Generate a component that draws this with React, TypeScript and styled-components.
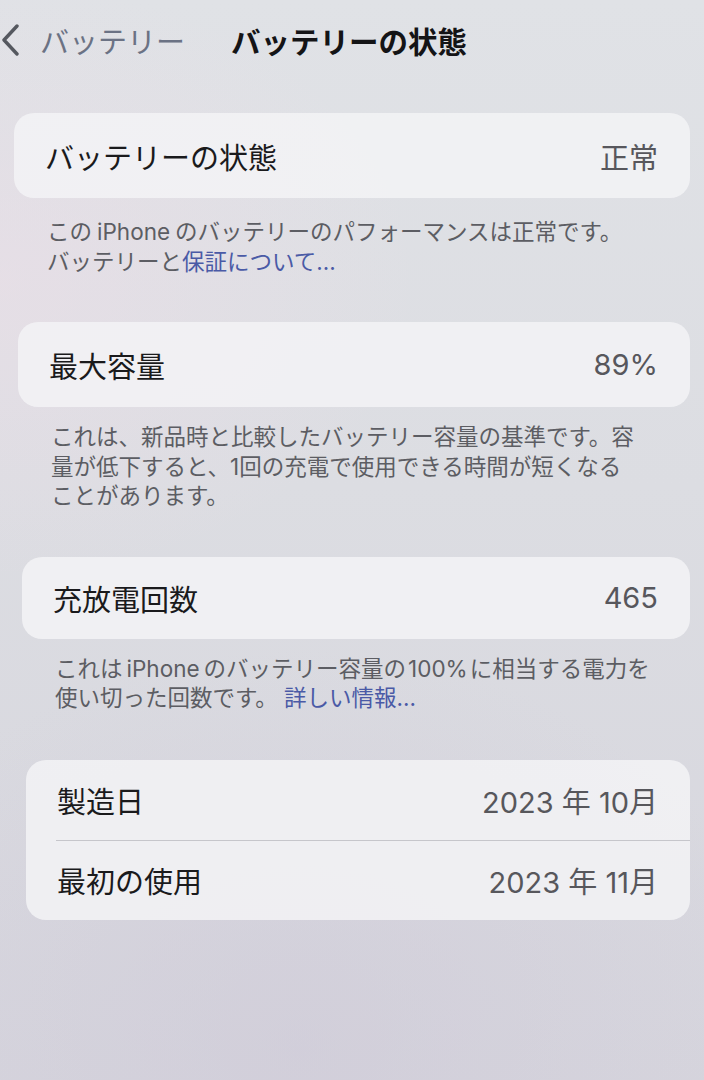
import React from 'react';
import styled, { createGlobalStyle } from 'styled-components';

const GlobalStyle = createGlobalStyle`
    html, body {
        margin: 0;
        padding: 0;
    }
    body {
        font-family: Inter, 'Noto Sans CJK JP', 'Noto Sans', sans-serif;
        -webkit-font-smoothing: antialiased;
    }
`;

const Screen = styled.div`
    width: 704px;
    height: 1080px;
    overflow: hidden;
    box-sizing: border-box;
    background:
        radial-gradient(ellipse 420px 300px at 0px 280px, rgba(236, 222, 232, 0.55), transparent),
        radial-gradient(ellipse 500px 400px at 300px 1050px, rgba(205, 200, 215, 0.5), transparent),
        linear-gradient(180deg, #e0e2e6 0%, #dcdde2 45%, #d6d5dd 100%);
    color: #1c1c1e;
`;

const NavBar = styled.div`
    display: flex;
    align-items: center;
    height: 80px;
    padding: 0 0 0 1px;
`;

const BackButton = styled.div`
    display: flex;
    align-items: center;
    gap: 20px;
    color: #6b7284;
    font-size: 29px;
`;

const NavTitle = styled.div`
    margin-left: 46px;
    font-size: 29.5px;
    font-weight: 700;
    color: #141416;
`;

const Section = styled.section<{ $indent: number; $gap: number }>`
    margin: ${p => p.$gap}px 14px 0 ${p => p.$indent}px;
`;

const Card = styled.div`
    background: rgba(243, 243, 246, 0.85);
    border-radius: 20px;
    overflow: hidden;
`;

const Row = styled.div<{ $height: number }>`
    display: flex;
    align-items: center;
    justify-content: space-between;
    height: ${p => p.$height}px;
    padding: 0 32px 0 31px;
    font-size: 29px;
`;

const Divider = styled.div`
    height: 1px;
    margin-left: 30px;
    background: #c6c6cb;
`;

const Label = styled.span`
    color: #1a1a1c;
`;

const Value = styled.span`
    color: #57575c;
`;

const Footer = styled.p<{ $top: number }>`
    margin: ${p => p.$top}px 0 0 0;
    padding-left: 33px;
    font-size: 22.5px;
    line-height: 29.5px;
    color: #5c5d63;
    white-space: nowrap;
`;

// latin words set inside Japanese text get a little air on each side
const Latin = styled.span<{ $space: number }>`
    margin: 0 ${p => p.$space}px;
`;

const Link = styled.span`
    color: #4a5aa6;
`;

const Chevron = () => (
    <svg width="19" height="32" viewBox="0 0 19 32" fill="none">
        <path d="M16 2 L3 16 L16 30" stroke="#55585f" strokeWidth="3.4" strokeLinecap="round" strokeLinejoin="round" />
    </svg>
);

const App: React.FC = () => (
    <Screen>
        <GlobalStyle />
        <NavBar>
            <BackButton>
                <Chevron />
                <span>バッテリー</span>
            </BackButton>
            <NavTitle>バッテリーの状態</NavTitle>
        </NavBar>

        <Section $indent={14} $gap={33}>
            <Card>
                <Row $height={85}>
                    <Label>バッテリーの状態</Label>
                    <Value>正常</Value>
                </Row>
            </Card>
            <Footer $top={19}>
                この<Latin $space={5}>iPhone</Latin>のバッテリーのパフォーマンスは正常です。
                <br />
                バッテリーと<Link>保証について...</Link>
            </Footer>
        </Section>

        <Section $indent={18} $gap={46}>
            <Card>
                <Row $height={85}>
                    <Label>最大容量</Label>
                    <Value>89%</Value>
                </Row>
            </Card>
            <Footer $top={15}>
                これは、新品時と比較したバッテリー容量の基準です。容
                <br />
                量が低下すると、1回の充電で使用できる時間が短くなる
                <br />
                ことがあります。
            </Footer>
        </Section>

        <Section $indent={22} $gap={46}>
            <Card>
                <Row $height={82}>
                    <Label>充放電回数</Label>
                    <Value>465</Value>
                </Row>
            </Card>
            <Footer $top={15}>
                これは<Latin $space={4}>iPhone</Latin>のバッテリー容量の<Latin $space={2}>100%</Latin>に相当する電力を
                <br />
                使い切った回数です。 <Link>詳しい情報...</Link>
            </Footer>
        </Section>

        <Section $indent={26} $gap={47}>
            <Card>
                <Row $height={80}>
                    <Label>製造日</Label>
                    <Value>2023 年 10月</Value>
                </Row>
                <Divider />
                <Row $height={79}>
                    <Label>最初の使用</Label>
                    <Value>2023 年 11月</Value>
                </Row>
            </Card>
        </Section>
    </Screen>
);

export default App;
